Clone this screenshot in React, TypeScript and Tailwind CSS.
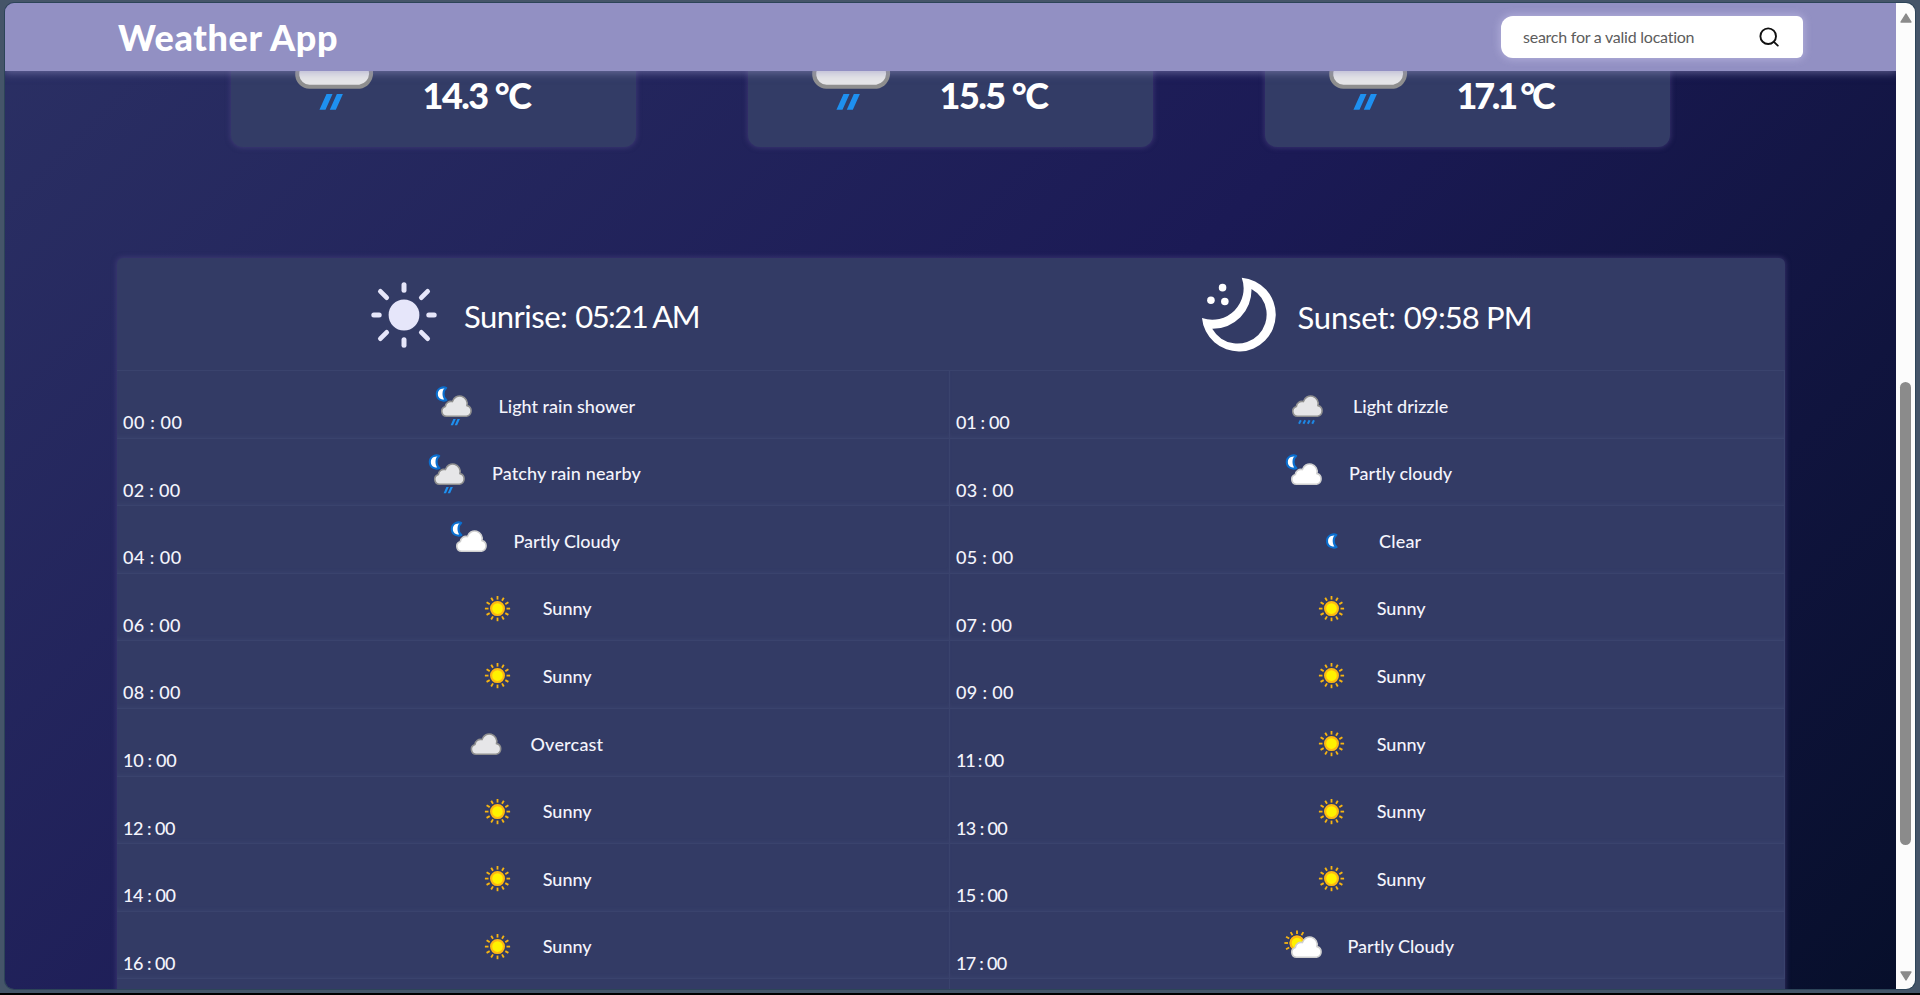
import React from "react";

type Kind = "rainNight" | "drizzle" | "cloudNight" | "moon" | "sun" | "overcast" | "cloudDay";

const CLOUD =
  "M15.6 33.2 A5 5 0 0 1 14.4 23.4 A5.4 5.4 0 0 1 21.4 18.6 A7.5 7.5 0 0 1 35.9 22.6 A5.4 5.4 0 0 1 35.5 33.2 Z";

function Cloud({ dark, dx = 0 }: { dark?: boolean; dx?: number }) {
  return (
    <g transform={`translate(${dx} 0)`}>
      <path d={CLOUD} fill={dark ? "#e6e6e8" : "#ffffff"} stroke={dark ? "#8f8f8f" : "#cfcfcf"} strokeWidth="1.6" strokeLinejoin="round" />
    </g>
  );
}

function Crescent({ dx = 0, dy = 0 }: { dx?: number; dy?: number }) {
  return (
    <path
      transform={`translate(${dx} ${dy})`}
      d="M15.2 4.9 C12.5 3.7 5.8 4.6 5.8 11 C5.8 17.4 12.5 18.3 15.4 17.1 C11.6 14.4 11.6 7.6 15.2 4.9 Z"
      fill="#ffffff"
      stroke="#0a6fd0"
      strokeWidth="2.1"
      strokeLinejoin="round"
    />
  );
}

function SunDisc({ cx, cy, from = 0, to = 12 }: { cx: number; cy: number; from?: number; to?: number }) {
  const rays = Array.from({ length: 12 }, (_, i) => i).filter((i) => i >= from && i < to);
  return (
    <g transform={`translate(${cx} ${cy})`}>
      {rays.map((i) => (
        <line key={i} x1="0" y1="-9" x2="0" y2="-12.6" stroke="#f7b512" strokeWidth="1.8" transform={`rotate(${i * 30})`} />
      ))}
      <circle r="6.4" fill="#fff200" stroke="#fdb813" strokeWidth="2.2" />
    </g>
  );
}

function WeatherIcon({ kind, className }: { kind: Kind | "rain"; className: string }) {
  return (
    <svg viewBox="0 0 45 45" className={className}>
      {kind === "sun" && <SunDisc cx={22.5} cy={22.6} />}
      {kind === "moon" && <Crescent dx={10.2} dy={12} />}
      {kind === "overcast" && <Cloud dark dx={-2.4} />}
      {kind === "cloudDay" && (
        <>
          <SunDisc cx={17} cy={19} from={8} to={12} />
          <SunDisc cx={17} cy={19} from={0} to={2} />
          <Cloud dx={1} />
        </>
      )}
      {kind === "cloudNight" && (
        <>
          <Crescent />
          <Cloud />
        </>
      )}
      {kind === "drizzle" && (
        <>
          <Cloud dark dx={-3} />
          {[0, 4.4, 8.8, 13.2].map((x) => (
            <line key={x} x1={15.8 + x} y1="37.2" x2={14 + x} y2="40.8" stroke="#1e88e5" strokeWidth="2" />
          ))}
        </>
      )}
      {(kind === "rainNight" || kind === "rain") && (
        <>
          {kind === "rainNight" && <Crescent />}
          <Cloud dark />
          <path d="M22.4 36.1h2.4l-2.8 6.2h-2.4zM26.5 36.1h2.4l-2.8 6.2h-2.4z" fill="#1e90f0" />
        </>
      )}
    </svg>
  );
}

const labelStyle: Record<string, string> = {
  "Light rain shower": "w-[137px]",
  "Patchy rain nearby": "w-[150px] tracking-[0.12px]",
  "Partly Cloudy": "w-[107px]",
  "Partly cloudy": "w-[104px]",
  "Light drizzle": "w-[96px]",
  Sunny: "w-[48.5px]",
  Overcast: "w-[73px] tracking-[0.2px]",
  Clear: "w-[44px] tracking-[0.2px]",
};

const hours: { time: string; label: string; kind: Kind; fit: string }[] = [
  { time: "00 : 00", label: "Light rain shower", kind: "rainNight", fit: "tracking-[0.6px]" },
  { time: "01 : 00", label: "Light drizzle", kind: "drizzle", fit: "tracking-[-0.3px]" },
  { time: "02 : 00", label: "Patchy rain nearby", kind: "rainNight", fit: "tracking-[0.3px]" },
  { time: "03 : 00", label: "Partly cloudy", kind: "cloudNight", fit: "tracking-[0.35px]" },
  { time: "04 : 00", label: "Partly Cloudy", kind: "cloudNight", fit: "tracking-[0.45px]" },
  { time: "05 : 00", label: "Clear", kind: "moon", fit: "tracking-[0.3px]" },
  { time: "06 : 00", label: "Sunny", kind: "sun", fit: "tracking-[0.35px]" },
  { time: "07 : 00", label: "Sunny", kind: "sun", fit: "tracking-[0.1px]" },
  { time: "08 : 00", label: "Sunny", kind: "sun", fit: "tracking-[0.35px]" },
  { time: "09 : 00", label: "Sunny", kind: "sun", fit: "tracking-[0.35px]" },
  { time: "10 : 00", label: "Overcast", kind: "overcast", fit: "tracking-[-0.3px]" },
  { time: "11 : 00", label: "Sunny", kind: "sun", fit: "tracking-[-1.2px]" },
  { time: "12 : 00", label: "Sunny", kind: "sun", fit: "tracking-[-0.5px]" },
  { time: "13 : 00", label: "Sunny", kind: "sun", fit: "tracking-[-0.6px]" },
  { time: "14 : 00", label: "Sunny", kind: "sun", fit: "tracking-[-0.4px]" },
  { time: "15 : 00", label: "Sunny", kind: "sun", fit: "tracking-[-0.6px]" },
  { time: "16 : 00", label: "Sunny", kind: "sun", fit: "tracking-[-0.5px]" },
  { time: "17 : 00", label: "Partly Cloudy", kind: "cloudDay", fit: "tracking-[-0.7px]" },
];

function HourCell({ time, label, kind, fit }: { time: string; label: string; kind: Kind; fit: string }) {
  return (
    <div className="relative flex h-[67.6px] items-center justify-center border-b border-r border-[#3a436d] pt-[2.5px] shadow-[inset_0_-3px_4px_-2px_rgba(83,92,145,0.18)]">
      <span className={`absolute bottom-[3.5px] left-[6px] text-[18px] leading-[24px] font-medium whitespace-nowrap ${fit}`}>{time}</span>
      <WeatherIcon kind={kind} className="size-[45px] shrink-0" />
      <span className={`ml-[23px] text-[18px] leading-[24px] font-medium whitespace-nowrap ${labelStyle[label]}`}>{label}</span>
    </div>
  );
}

function DayCard({ temp, fit }: { temp: string; fit: string }) {
  return (
    <div className="-mt-[60px] flex h-[135.5px] w-[405px] items-end rounded-[12px] bg-[#333c66] pb-[30.5px] pl-[38.5px] shadow-[0_0_5px_1px_rgba(83,72,135,0.5)]">
      <WeatherIcon kind="rain" className="size-[113.5px] shrink-0" />
      <span className={`-mb-[1px] ml-[39.5px] text-[36px] leading-[44px] font-black whitespace-nowrap ${fit}`}>{temp}</span>
    </div>
  );
}

function SunriseIcon() {
  return (
    <svg viewBox="-33 -33 66 66" className="size-[66px] shrink-0">
      <circle r="15.4" fill="#e6e6fa" />
      {[0, 90, 180, 270].map((a) => (
        <line key={a} x1="0" y1="-30.2" x2="0" y2="-24.8" stroke="#e6e6fa" strokeWidth="5" strokeLinecap="round" transform={`rotate(${a})`} />
      ))}
      {[45, 135, 225, 315].map((a) => (
        <line key={a} x1="0" y1="-33.4" x2="0" y2="-24.5" stroke="#e6e6fa" strokeWidth="4.8" strokeLinecap="round" transform={`rotate(${a})`} />
      ))}
    </svg>
  );
}

function SunsetIcon() {
  return (
    <svg viewBox="0 0 78 78" className="size-[77.5px] shrink-0">
      <path
        fillRule="evenodd"
        fill="#ffffff"
        d="M42 1.7 A37.2 37.2 0 1 1 2 42.2 A31.5 31.5 0 0 0 42 1.7 Z M51.8 13 A39 39 0 0 1 12.3 53.2 A29.3 29.3 0 1 0 51.8 13 Z"
      />
      <circle cx="22.7" cy="11.7" r="3.8" fill="#ffffff" />
      <circle cx="11" cy="24.4" r="3.8" fill="#ffffff" />
      <circle cx="25" cy="25.7" r="3.8" fill="#ffffff" />
    </svg>
  );
}

export default function App() {
  return (
    <div className="flex h-[995px] w-[1920px] flex-col overflow-hidden bg-[#455569] font-['Lato',sans-serif] text-white">
      <div className="mt-[3px] ml-[5px] flex h-[986px] w-[1910px] shrink-0 overflow-hidden rounded-[9px] shadow-[0_0_0_1px_#2c4458]">
        <div className="flex w-[1891px] shrink-0 flex-col overflow-hidden bg-[linear-gradient(135deg,#2b3064_0%,#1b1a55_50%,#070f2b_100%)]">
          <header className="relative z-10 flex h-[68px] shrink-0 items-center justify-between bg-[#9290c3] pr-[93px] pl-[113px] shadow-[0_1px_8px_1px_rgba(146,144,195,0.55)]">
            <h1 className="text-[36px] leading-[44px] font-black tracking-[0.65px] whitespace-nowrap">Weather App</h1>
            <div className="-mt-[1px] flex h-[42px] w-[302px] items-center justify-between rounded-l-[12px] rounded-r-[6px] bg-white pr-[24px] pl-[22px] shadow-[0_0_8px_1px_rgba(220,215,250,0.45)]">
              <span className="text-[16px] leading-[20px] tracking-[-0.24px] whitespace-nowrap text-[#5c5c5c]">search for a valid location</span>
              <svg viewBox="0 0 20 20" className="size-[20px]" fill="none" stroke="#111111" strokeWidth="1.9" strokeLinecap="round">
                <circle cx="9.2" cy="9.2" r="7.8" />
                <path d="M14.9 14.9 18.8 18.6" />
              </svg>
            </div>
          </header>
          <main className="flex flex-col">
            <section className="flex gap-[112px] pl-[226px]">
              <DayCard temp="14.3 °C" fit="tracking-[-1.5px]" />
              <DayCard temp="15.5 °C" fit="tracking-[-1.5px]" />
              <DayCard temp="17.1 °C" fit="tracking-[-3.2px]" />
            </section>
            <section className="mt-[111.5px] ml-[112px] w-[1668px] rounded-[6px] bg-[#333b65] shadow-[0_0_5px_1px_rgba(83,72,135,0.5)]">
              <div className="grid h-[113px] grid-cols-[833px_835px] border-b border-[#3a436d]">
                <div className="flex items-center pt-[1.5px] pl-[254px]">
                  <SunriseIcon />
                  <p className="ml-[27px] flex gap-[8px] pt-[3px] text-[31px] leading-[40px] whitespace-nowrap">
                    <span className="tracking-[-0.5px]">Sunrise:</span>
                    <span className="tracking-[-1.6px]">05:21 AM</span>
                  </p>
                </div>
                <div className="flex items-center pt-[2px] pl-[250px]">
                  <SunsetIcon />
                  <p className="ml-[20px] flex gap-[8px] pt-[3px] text-[31px] leading-[40px] whitespace-nowrap">
                    <span className="tracking-[-0.2px]">Sunset:</span>
                    <span className="tracking-[-0.9px]">09:58 PM</span>
                  </p>
                </div>
              </div>
              <div className="grid grid-cols-[833px_835px] text-[#f4f4fc]">
                {hours.map((h) => (
                  <HourCell key={h.time} {...h} />
                ))}
                <div className="h-[40px] border-r border-[#3a436d]" />
                <div className="h-[40px]" />
              </div>
            </section>
          </main>
        </div>
        <aside className="flex w-[19px] shrink-0 flex-col items-center bg-[#fcfcfc]">
          <svg viewBox="0 0 12 10" className="mt-[10px] h-[10px] w-[12px] shrink-0">
            <path d="M6 1 11 9H1Z" fill="#8b8b8b" stroke="#8b8b8b" strokeWidth="1.4" strokeLinejoin="round" />
          </svg>
          <div className="mt-[359px] h-[463px] w-[11px] rounded-full bg-[#8b8b8b]" />
          <svg viewBox="0 0 12 10" className="mt-auto mb-[8px] h-[10px] w-[12px] shrink-0">
            <path d="M6 9 11 1H1Z" fill="#8b8b8b" stroke="#8b8b8b" strokeWidth="1.4" strokeLinejoin="round" />
          </svg>
        </aside>
      </div>
      <div className="mt-[4px] h-[2px] shrink-0 bg-black" />
    </div>
  );
}
